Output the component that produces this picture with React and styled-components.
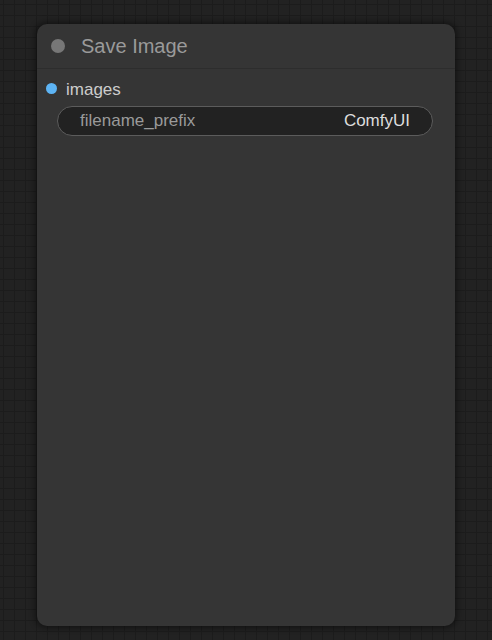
import React from 'react'
import styled, { createGlobalStyle } from 'styled-components'

const Global = createGlobalStyle`
  html, body {
    margin: 0;
    padding: 0;
    background: #222222;
  }
  body {
    font-family: 'Liberation Sans', Arial, sans-serif;
  }
`

const Canvas = styled.div`
  width: 492px;
  height: 640px;
  overflow: hidden;
  box-sizing: border-box;
  padding: 24px 0 0 37px;
  background-color: #222222;
  background-image:
    linear-gradient(to right, #1c1c1c 1px, transparent 1px),
    linear-gradient(to bottom, #1c1c1c 1px, transparent 1px);
  background-size: 11px 11px;
  background-position: 3px 4px;
`

const Node = styled.div`
  width: 418px;
  height: 602px;
  background: #353535;
  border-radius: 10px;
  box-shadow: 0 0 6px 2px rgba(0, 0, 0, 0.45);
  display: flex;
  flex-direction: column;
`

const Title = styled.div`
  height: 44px;
  display: flex;
  align-items: center;
  padding-left: 14px;
  gap: 16px;
  border-bottom: 1px solid #2d2d2d;
  color: #9a9a9a;
  font-size: 20px;
`

const Dot = styled.span`
  width: ${p => p.size}px;
  height: ${p => p.size}px;
  border-radius: 50%;
  background: ${p => p.color};
  flex: none;
  margin-top: ${p => p.lift || 0}px;
`

const Slot = styled.div`
  display: flex;
  align-items: center;
  gap: 9px;
  padding: 11px 0 0 9px;
  height: 20px;
  color: #cccccc;
  font-size: 17px;
`

const Widget = styled.div`
  margin: 6px 22px 0 20px;
  height: 28px;
  border: 1px solid #5c5c5c;
  border-radius: 15px;
  background: #222222;
  display: flex;
  align-items: center;
  justify-content: space-between;
  padding: 0 22px 0 22px;
  font-size: 17px;
`

const Label = styled.span`
  color: #9a9a9a;
`

const Value = styled.span`
  color: #dddddd;
`

export default function App() {
  return (
    <Canvas>
      <Global />
      <Node>
        <Title>
          <Dot size={14} color="#777777" />
          <span>Save Image</span>
        </Title>
        <Slot>
          <Dot size={11} color="#5db4f4" lift={-3} />
          <span>images</span>
        </Slot>
        <Widget>
          <Label>filename_prefix</Label>
          <Value>ComfyUI</Value>
        </Widget>
      </Node>
    </Canvas>
  )
}
